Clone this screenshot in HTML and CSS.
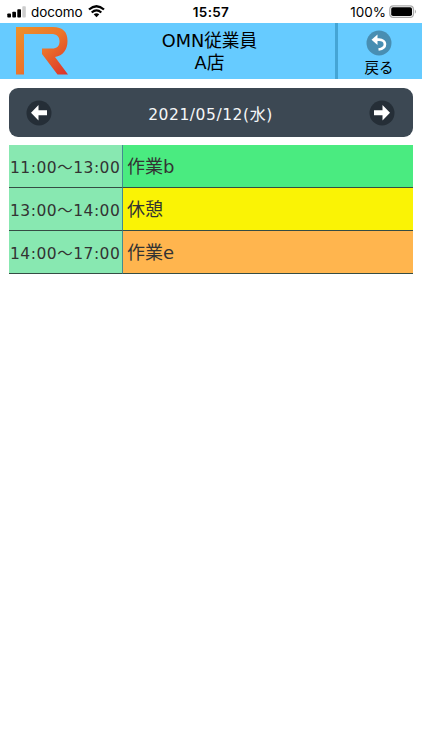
FILE: index.html
```html
<!DOCTYPE html>
<html lang="ja">
<head>
<meta charset="utf-8">
<title>OMN従業員</title>
<link rel="stylesheet" href="styles.css">
</head>
<body>
<div class="status">
  <div class="carrier">
    <svg class="signal" width="19" height="12" viewBox="0 0 19 12"><rect x=".3" y="7.500" width="3.700" height="4" rx=".8"/><rect x="5.300" y="5.800" width="3.700" height="5.700" rx=".8"/><rect x="10.300" y="3.300" width="3.700" height="8.200" rx=".8"/><rect class="dim" x="15.300" y=".3" width="3.500" height="11.200" rx=".8"/></svg>
    <span class="network">docomo</span>
    <svg class="wifi" width="17" height="13" viewBox="0 0 17 13"><path d="M1 4.500Q8.500-2 16 4.500M3.700 7.500Q8.500 3.300 13.300 7.500"/><path class="dot" d="M5.700 9.300Q8.500 7 11.300 9.300L8.500 12.200Z"/></svg>
  </div>
  <div class="clock">15:57</div>
  <div class="power"><span>100%</span>
    <svg width="28" height="14" viewBox="0 0 28 14"><rect class="case" x=".8" y=".8" width="23.600" height="11.600" rx="3.500"/><rect x="2.200" y="2.200" width="20.800" height="8.800" rx="1.800"/><path class="tip" d="M25.800 4.500Q28.200 6.600 25.800 8.800Z"/></svg>
  </div>
</div>
<header class="header">
  <div class="logo">
    <svg width="54" height="50" viewBox="0 0 54 50">
      <defs><linearGradient id="flame" gradientUnits="userSpaceOnUse" x1="5" y1="0" x2="50" y2="48"><stop offset="0" stop-color="#ed9029"/><stop offset=".5" stop-color="#ec752a"/><stop offset="1" stop-color="#dc352b"/></linearGradient></defs>
      <path fill="url(#flame)" d="M1 1H38C48 1 52.500 6 52.500 15C52.500 24 48 29.500 40 31L53 48.500H42.500L27 28V22.500H37C42 22.500 44.500 20 44.500 15.500C44.500 10.500 42 8 36 8H9V48.500H1Z"/>
    </svg>
  </div>
  <div class="title"><div>OMN従業員</div><div>A店</div></div>
  <div class="back">
    <svg width="26" height="26" viewBox="0 0 26 26"><circle cx="13" cy="13" r="12.500" fill="#488eb2"/><path d="M11.500 4.500L5.500 9.700L11.500 15Z" fill="#fff"/><path d="M10 9.700H13C20.500 9.700 21.500 18.200 12.500 19.500" fill="none" stroke="#fff" stroke-width="2.700"/></svg>
    <span>戻る</span>
  </div>
</header>
<main>
  <nav class="datebar">
    <svg width="26" height="26" viewBox="0 0 26 26"><circle cx="13" cy="13" r="12.500"/><path d="M5 12.700L12.500 5V10.200H21V15.200H12.500V20.500Z"/></svg>
    <span>2021/05/12(<span class="day">水</span>)</span>
    <svg width="26" height="26" viewBox="0 0 26 26"><circle cx="13" cy="13" r="12.500"/><path d="M21 12.700L13.500 5V10.200H5V15.200H13.500V20.500Z"/></svg>
  </nav>
  <div class="schedule">
    <div class="time">11:00～13:00</div><div class="task green">作業b</div>
    <div class="time">13:00～14:00</div><div class="task yellow">休憩</div>
    <div class="time">14:00～17:00</div><div class="task orange">作業e</div>
  </div>
</main>
</body>
</html>
```
FILE: styles.css
```css
* { box-sizing: border-box; }
body { margin: 0; background: #fff; color: #000; font-family: "DejaVu Sans", "Noto Sans CJK JP", sans-serif; }
svg { display: block; flex: none; }
.status { height: 23px; display: grid; grid-template-columns: 1fr 60px 1fr; align-items: center; font: 13.5px/20px Inter, sans-serif; }
.carrier { display: flex; align-items: center; padding-left: 7px; }
.network { margin: 0 5px 0 5px; letter-spacing: -.1px; }
.dim { fill: #ccc; }
.wifi path { fill: none; stroke: #000; stroke-width: 2.3; }
.wifi .dot { fill: #000; stroke: none; }
.clock { text-align: center; font-weight: 600; font-size: 13.5px; letter-spacing: .3px; }
.power { display: flex; justify-content: flex-end; align-items: center; gap: 3px; padding-right: 5px; }
.case { fill: none; stroke: #aaa; stroke-width: 1.2; }
.tip { fill: #aaa; }
.header { height: 56px; overflow: hidden; background: #66cbff; display: grid; grid-template-columns: 84px 251px 87px; }
.logo { padding: 3px 0 0 15px; }
.title { text-align: center; font-size: 17.7px; line-height: 22px; padding-top: 7px; }
.back { border-left: 3px solid #45a5d5; display: flex; flex-direction: column; align-items: center; padding: 7px 2px 0 0; font-size: 14.5px; line-height: 24px; }
main { padding: 9px 9px 0; }
.datebar { height: 49px; border-radius: 9px; background: #3c4853; color: #f5f7f8; display: flex; align-items: center; justify-content: space-between; padding: 0 18px 0 17px; font-size: 15.5px; letter-spacing: .55px; }
.day { font-size: 16px; }
.datebar circle { fill: #252e37; }
.datebar path { fill: #fff; }
.schedule { margin-top: 8px; display: grid; grid-template-columns: 114px 1fr; grid-auto-rows: 43px; color: #333; }
.time, .task { border-bottom: 1px solid #354d44; line-height: 44px; white-space: nowrap; overflow: hidden; }
.time { background: #88e8b1; border-right: 1px solid #438b91; font-size: 15.5px; letter-spacing: .5px; padding: 1px 0 0 1px; }
.task { font-size: 18px; padding-left: 4px; }
.green { background: #4aeb80; }
.yellow { background: #faf305; }
.orange { background: #ffb54e; }
```
